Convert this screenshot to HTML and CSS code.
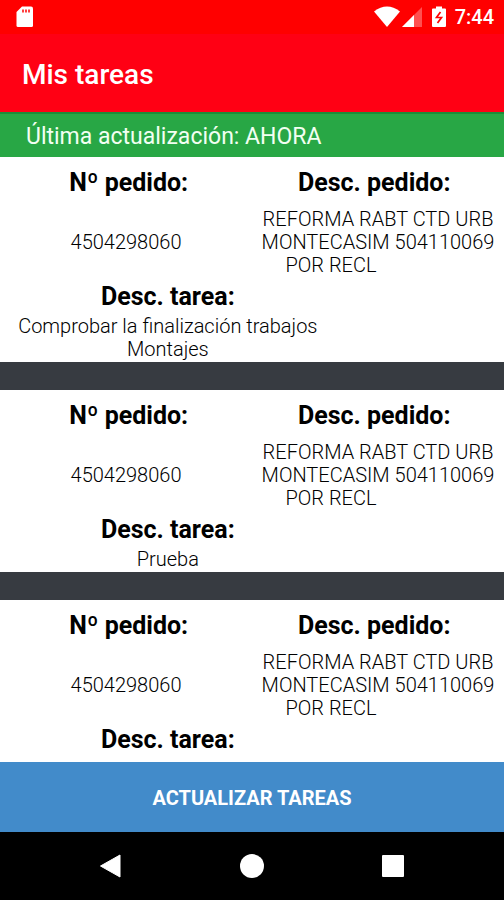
FILE: index.html
```html
<!DOCTYPE html>
<html lang="es">
<head>
<meta charset="utf-8">
<meta name="viewport" content="width=device-width, initial-scale=1">
<title>Mis tareas</title>
<link rel="stylesheet" href="styles.css">
</head>
<body>
<div class="status-bar">
  <svg class="sd-icon" width="18" height="22" viewBox="0 0 18 22" aria-hidden="true">
    <path fill="#fff" d="M6 0.500H15Q17 0.500 17 2.500V19.500Q17 21 15.500 21H2Q0.500 21 0.500 19.500V6Z"/>
    <path stroke="#f00" stroke-width="1.500" d="M7 3.500V6.500M10 3.500V6.500M13 3.500V6.500"/>
  </svg>
  <div class="status-right">
    <svg class="signals" viewBox="0 0 56 24" aria-hidden="true">
      <path fill="#fff" d="M0 6.500Q13 -3.500 26 6.500L13 22Z"/>
      <path fill="#ff5050" d="M48 2V22H28Z"/>
      <path fill="#fff" d="M40 10V22H28Z"/>
    </svg>
    <svg class="battery" width="14" height="22" viewBox="0 0 14 22" aria-hidden="true">
      <path fill="#fff" d="M4 0.500H10V2.500H13Q14 2.500 14 3.500V20Q14 21 13 21H1Q0 21 0 20V3.500Q0 2.500 1 2.500H4Z"/>
      <path fill="none" stroke="#f00" stroke-width="1.700" d="M8.500 6L4.500 11.500H9.500L5.500 17"/>
    </svg>
    <span class="clock">7:44</span>
  </div>
</div>
<header class="app-bar"><h1>Mis tareas</h1></header>
<p class="updated">Última actualización: AHORA</p>
<main class="tasks">
  <article class="card">
    <div class="heads"><h2>Nº pedido:</h2><h2>Desc. pedido:</h2></div>
    <div class="values"><p>4504298060</p><p>REFORMA RABT CTD URB<br>MONTECASIM 504110069<br><span class="short-line">POR RECL</span></p></div>
    <div class="task"><h2>Desc. tarea:</h2><p>Comprobar la finalización trabajos Montajes</p></div>
  </article>
  <article class="card">
    <div class="heads"><h2>Nº pedido:</h2><h2>Desc. pedido:</h2></div>
    <div class="values"><p>4504298060</p><p>REFORMA RABT CTD URB<br>MONTECASIM 504110069<br><span class="short-line">POR RECL</span></p></div>
    <div class="task"><h2>Desc. tarea:</h2><p>Prueba</p></div>
  </article>
  <article class="card">
    <div class="heads"><h2>Nº pedido:</h2><h2>Desc. pedido:</h2></div>
    <div class="values"><p>4504298060</p><p>REFORMA RABT CTD URB<br>MONTECASIM 504110069<br><span class="short-line">POR RECL</span></p></div>
    <div class="task"><h2>Desc. tarea:</h2></div>
  </article>
</main>
<button class="refresh" type="button">ACTUALIZAR TAREAS</button>
<nav class="nav-bar" aria-label="Sistema">
  <button type="button" aria-label="Atrás"><svg width="24" height="24" viewBox="0 0 24 24"><path fill="#fff" stroke="#fff" stroke-linejoin="round" d="M21 1V23L1.500 12Z"/></svg></button>
  <button type="button" aria-label="Inicio"><svg width="24" height="24" viewBox="0 0 24 24"><circle cx="12" cy="12" r="12" fill="#fff"/></svg></button>
  <button type="button" aria-label="Recientes"><svg width="24" height="24" viewBox="0 0 24 24"><rect x="1" y="1" width="22" height="22" rx="1" fill="#fff"/></svg></button>
</nav>
</body>
</html>
```
FILE: styles.css
```css
* {
  box-sizing: border-box;
}

body {
  margin: 0;
  height: 100vh;
  display: flex;
  flex-direction: column;
  background: #fff;
  color: #000;
  font-family: Roboto, "Liberation Sans", sans-serif;
}

h1, h2, p {
  margin: 0;
}

.status-bar {
  flex: none;
  height: 34px;
  padding: 0 10px 0 16px;
  display: flex;
  align-items: center;
  justify-content: space-between;
  background: #f00;
}

.status-right {
  display: flex;
  align-items: center;
}

.signals {
  width: 56px;
  height: 24px;
}

.battery {
  margin: 0 9px 0 2px;
}

.clock {
  color: #fff;
  font-size: 20px;
  font-weight: 500;
}

.app-bar {
  flex: none;
  height: 78px;
  padding: 2px 22px 0;
  display: flex;
  align-items: center;
  background: #ff0014;
  color: #fff;
}

.app-bar h1 {
  font-size: 28px;
  font-weight: 500;
}

.updated {
  flex: none;
  height: 45px;
  padding: 0 26px;
  border-top: 2px solid #1d8b38;
  background: #28a745;
  color: #f2fff2;
  font-size: 23px;
  line-height: 45px;
}

.tasks {
  flex: 1;
  min-height: 0;
  overflow: hidden;
  display: flex;
  flex-direction: column;
  gap: 28px;
  background: #373b41;
}

.card {
  flex: none;
  padding: 11px 0 1px;
  background: #fff;
  text-align: center;
  font-size: 20px;
  line-height: 23px;
}

.card:last-child {
  flex: 1 0 auto;
}

.card h2 {
  font-size: 25px;
  font-weight: 700;
  line-height: 30px;
}

.card p {
  font-weight: 300;
}

.heads,
.values {
  display: grid;
  grid-template-columns: 1fr 1fr;
  align-items: center;
}

.heads {
  padding: 0 7px 0 6px;
}

.values {
  padding: 10px 0 5px;
}

.short-line {
  padding-right: 94px;
}

.task {
  width: 66.6%;
  padding: 0 16px;
}

.task p {
  padding-top: 3px;
}

.refresh {
  flex: none;
  height: 70px;
  padding: 2px 0 0;
  border: 0;
  background: #428bca;
  color: #fff;
  font-family: inherit;
  font-size: 20px;
  font-weight: 700;
}

.nav-bar {
  flex: none;
  height: 68px;
  padding: 0 41px;
  display: flex;
  align-items: center;
  background: #000;
}

.nav-bar button {
  flex: 1;
  height: 48px;
  padding: 0;
  border: 0;
  background: none;
}

.nav-bar svg {
  display: block;
  margin: 0 auto;
}
```
